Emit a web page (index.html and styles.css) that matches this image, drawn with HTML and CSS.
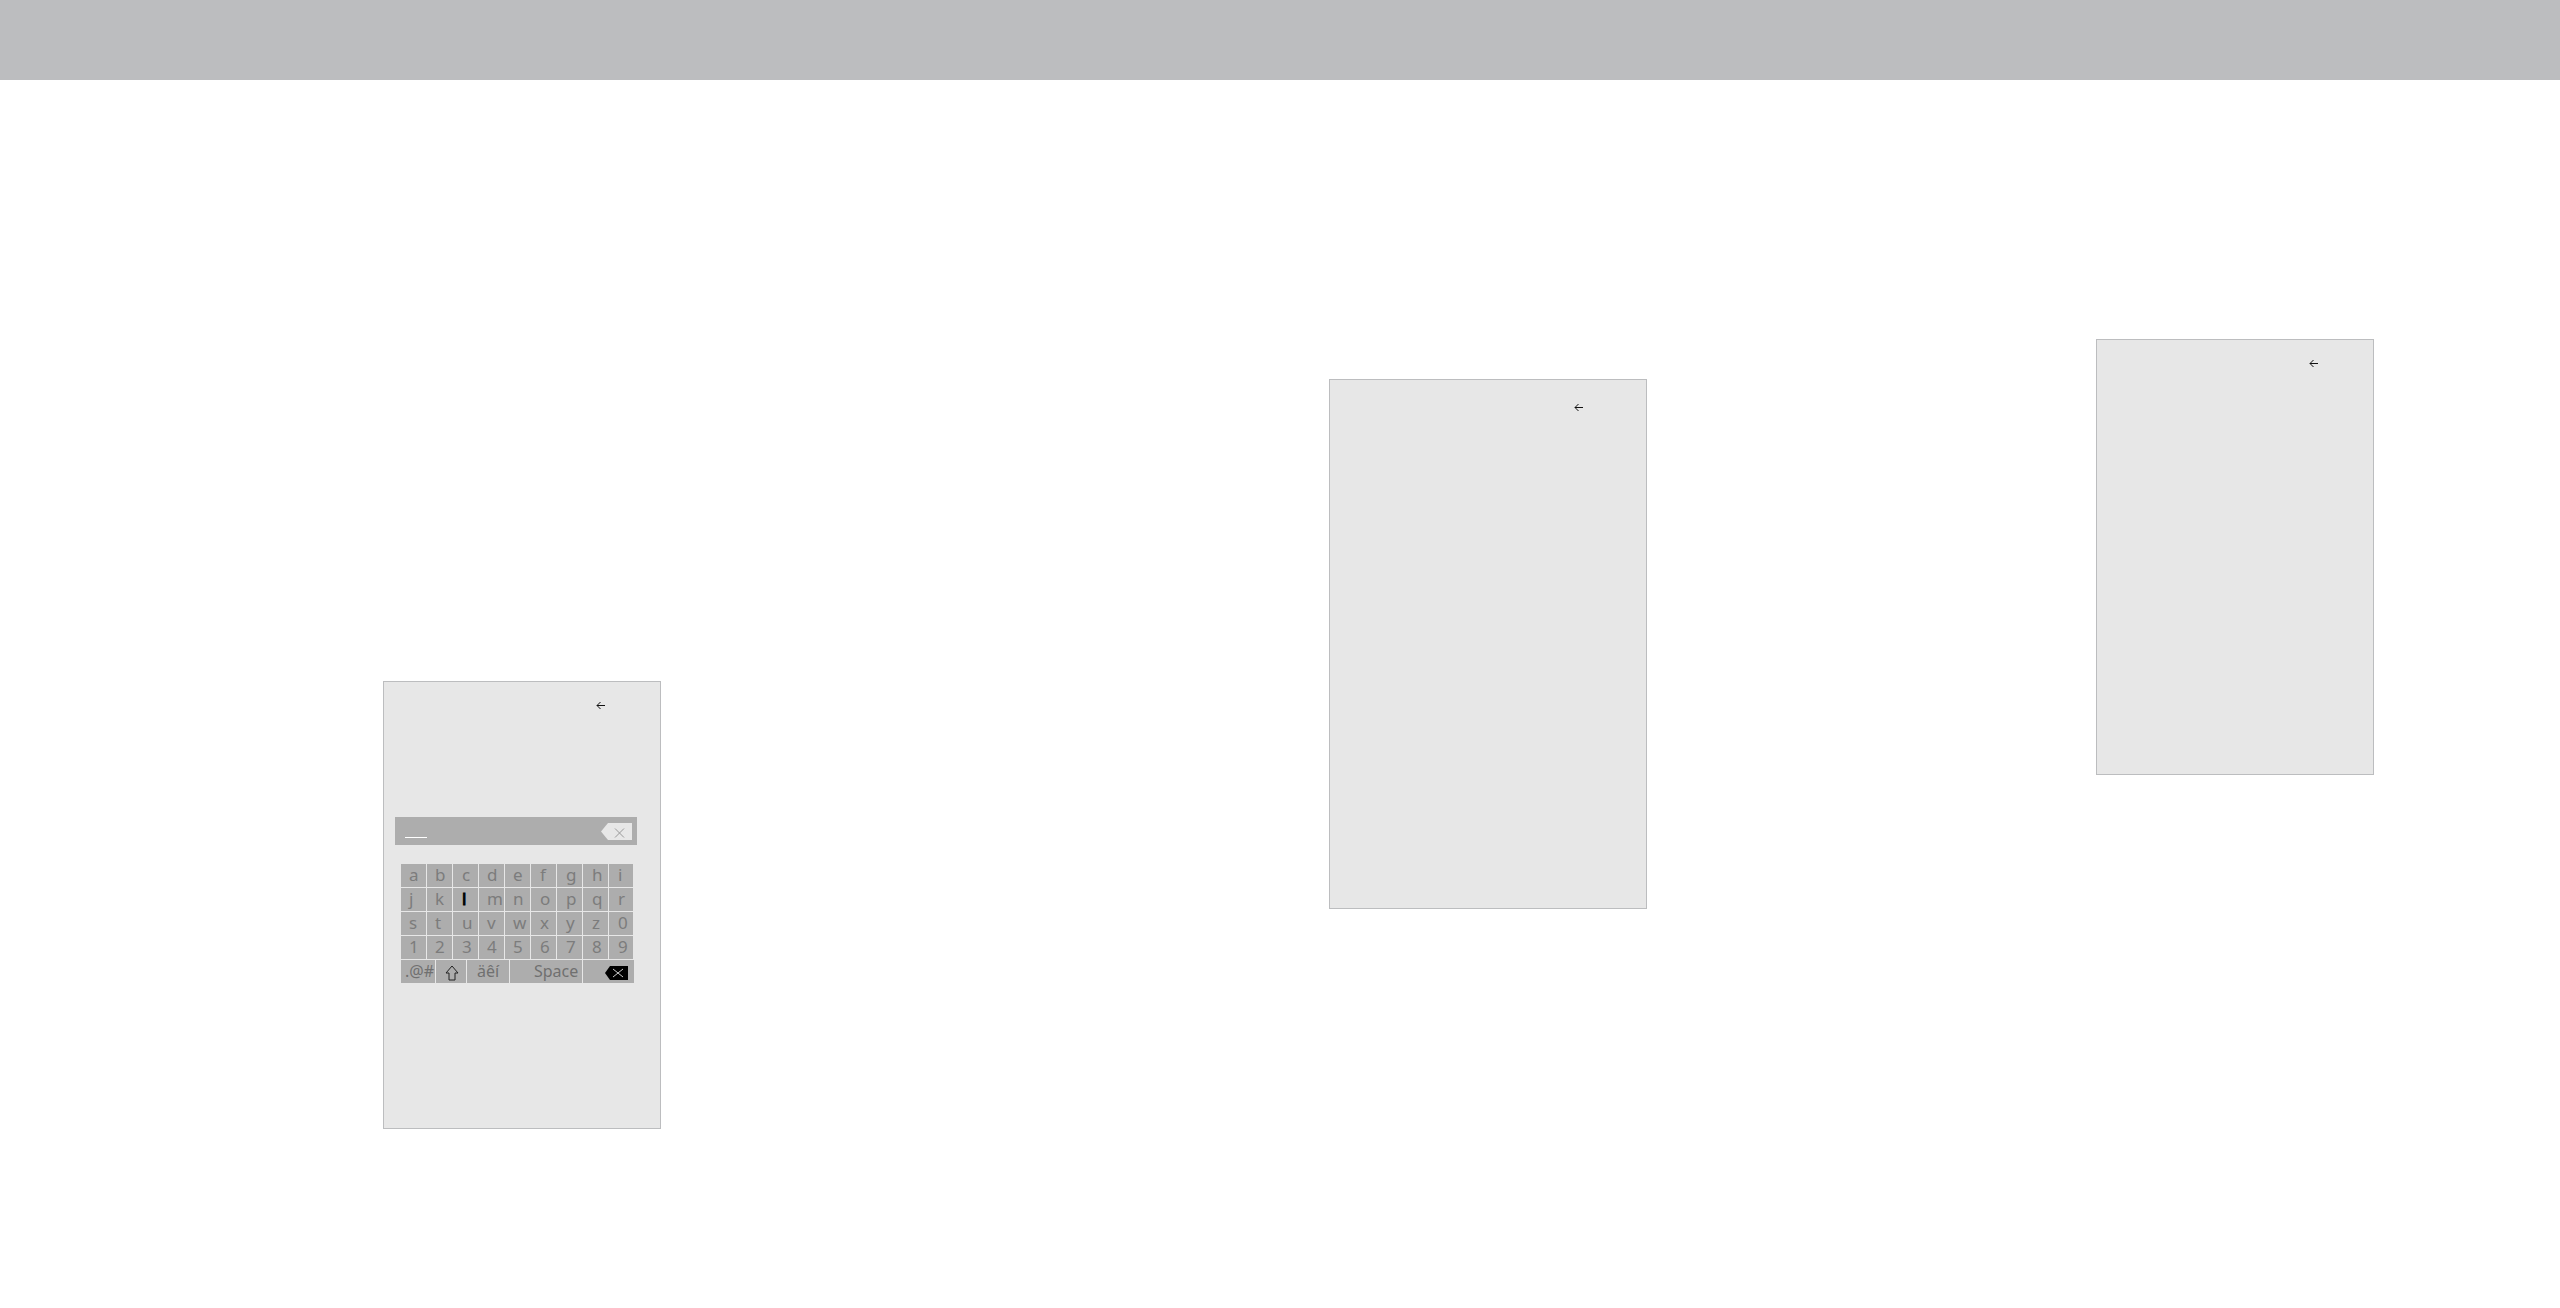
FILE: index.html
```html
<!DOCTYPE html>
<html lang="en">
<head>
<meta charset="utf-8">
<meta name="viewport" content="width=device-width, initial-scale=1">
<title>On-screen keyboard</title>
<link rel="stylesheet" href="styles.css">
</head>
<body>
<header class="topbar"></header>
<main class="stage">
  <section class="panel panel-keyboard">
    <button class="back" type="button" aria-label="Back"><svg viewBox="0 0 9 9"><path d="M9 4.500H1M4.500 1L1 4.500L4.500 8"/></svg></button>
    <div class="field">
      <input class="entry" type="text" aria-label="Entry">
      <button class="clear" type="button" aria-label="Clear"><svg viewBox="0 0 31 17"><path class="tag" d="M0 8.500L7 0H31V17H7Z"/><path class="cross" d="M14 5.500l9 9M23 5.500l-9 9"/></svg></button>
    </div>
    <div class="keys">
      <button class="key">a</button><button class="key">b</button><button class="key">c</button><button class="key">d</button><button class="key">e</button><button class="key">f</button><button class="key">g</button><button class="key">h</button><button class="key">i</button>
      <button class="key">j</button><button class="key">k</button><button class="key active">l</button><button class="key">m</button><button class="key">n</button><button class="key">o</button><button class="key">p</button><button class="key">q</button><button class="key">r</button>
      <button class="key">s</button><button class="key">t</button><button class="key">u</button><button class="key">v</button><button class="key">w</button><button class="key">x</button><button class="key">y</button><button class="key">z</button><button class="key">0</button>
      <button class="key">1</button><button class="key">2</button><button class="key">3</button><button class="key">4</button><button class="key">5</button><button class="key">6</button><button class="key">7</button><button class="key">8</button><button class="key">9</button>
    </div>
    <div class="keys-bottom">
      <button class="key symbols">.@#</button>
      <button class="key shift" aria-label="Shift"><svg viewBox="0 0 14 16"><path d="M7 1L1 8H4V15H10V8H13Z"/></svg></button>
      <button class="key accents">äêí</button>
      <button class="key space">Space</button>
      <button class="key delete" aria-label="Delete"><svg viewBox="0 0 23 14"><path class="tag" d="M0 7L5 0H23V14H5Z"/><path class="cross" d="M8 3l10 8M18 3L8 11"/></svg></button>
    </div>
  </section>
  <section class="panel panel-large">
    <button class="back" type="button" aria-label="Back"><svg viewBox="0 0 9 9"><path d="M9 4.500H1M4.500 1L1 4.500L4.500 8"/></svg></button>
  </section>
  <section class="panel panel-small">
    <button class="back" type="button" aria-label="Back"><svg viewBox="0 0 9 9"><path d="M9 4.500H1M4.500 1L1 4.500L4.500 8"/></svg></button>
  </section>
</main>
</body>
</html>
```
FILE: styles.css
```css
* {
  box-sizing: border-box;
}

body {
  margin: 0;
  background: #fff;
  font-family: "Noto Sans", "Open Sans", sans-serif;
}

button {
  padding: 0;
  border: 0;
  background: none;
  font: inherit;
}

svg {
  display: block;
  fill: none;
}

.topbar {
  height: 80px;
  background: #bcbdbf;
}

.stage {
  display: grid;
  grid-template-columns: 383fr 278px 668fr 318px 449fr 278px 186fr;
  align-items: start;
}

.panel {
  display: flex;
  flex-direction: column;
  padding: 19px 23px 0 11px;
  border: 1px solid #bcbdbf;
  background: #e7e7e7;
}

.panel-keyboard {
  grid-column: 2;
  min-height: 448px;
  margin-top: 601px;
}

.panel-large {
  grid-column: 4;
  min-height: 530px;
  margin-top: 299px;
  padding: 23px 31px 0;
}

.panel-small {
  grid-column: 6;
  min-height: 436px;
  margin-top: 259px;
}

.back {
  align-self: flex-end;
  margin-right: 32px;
}

.back svg {
  width: 9px;
  height: 9px;
  stroke: #111;
}

.field {
  display: flex;
  align-items: center;
  justify-content: space-between;
  height: 28px;
  margin-top: 107px;
  padding: 0 5px 0 10px;
  background: #adadad;
}

.entry {
  width: 22px;
  height: 14px;
  padding: 0;
  border: 0;
  border-bottom: 1px solid #fff;
  background: none;
}

.clear svg {
  width: 31px;
  height: 17px;
}

.clear .tag {
  fill: #e7e7e7;
}

.clear .cross {
  stroke: #999;
}

.keys,
.keys-bottom {
  display: grid;
  gap: 1px;
  margin-left: 6px;
}

.keys {
  grid-template-columns: repeat(8, 25px) 24px;
  grid-auto-rows: 23px;
  margin-top: 19px;
}

.keys-bottom {
  grid-template-columns: 34px 30px 42px 72px 51px;
  grid-auto-rows: 23px;
  margin-top: 1px;
}

.key {
  display: flex;
  align-items: center;
  padding: 0 0 2px 8px;
  background: #adadad;
  color: #7c7c7c;
  font-size: 17px;
  line-height: 22px;
}

.keys .key:nth-child(9n + 3),
.keys .key:nth-child(9n + 6),
.keys .key:nth-child(9n + 7),
.keys .key:nth-child(9n + 8),
.keys .key:nth-child(9n) {
  padding-left: 9px;
}

.keys .active {
  color: #000;
  -webkit-text-stroke: 1px #000;
}

.keys-bottom .key {
  color: #707070;
  font-size: 16px;
}

.symbols {
  padding-left: 4px;
}

.shift {
  padding: 2px 0 0 9px;
}

.shift svg {
  width: 14px;
  height: 16px;
  stroke: #222;
}

.accents {
  padding-left: 10px;
}

.space {
  padding-left: 24px;
}

.delete {
  padding: 2px 0 0 22px;
}

.delete svg {
  width: 23px;
  height: 14px;
}

.delete .tag {
  fill: #000;
}

.delete .cross {
  stroke: #ccc;
}
```
